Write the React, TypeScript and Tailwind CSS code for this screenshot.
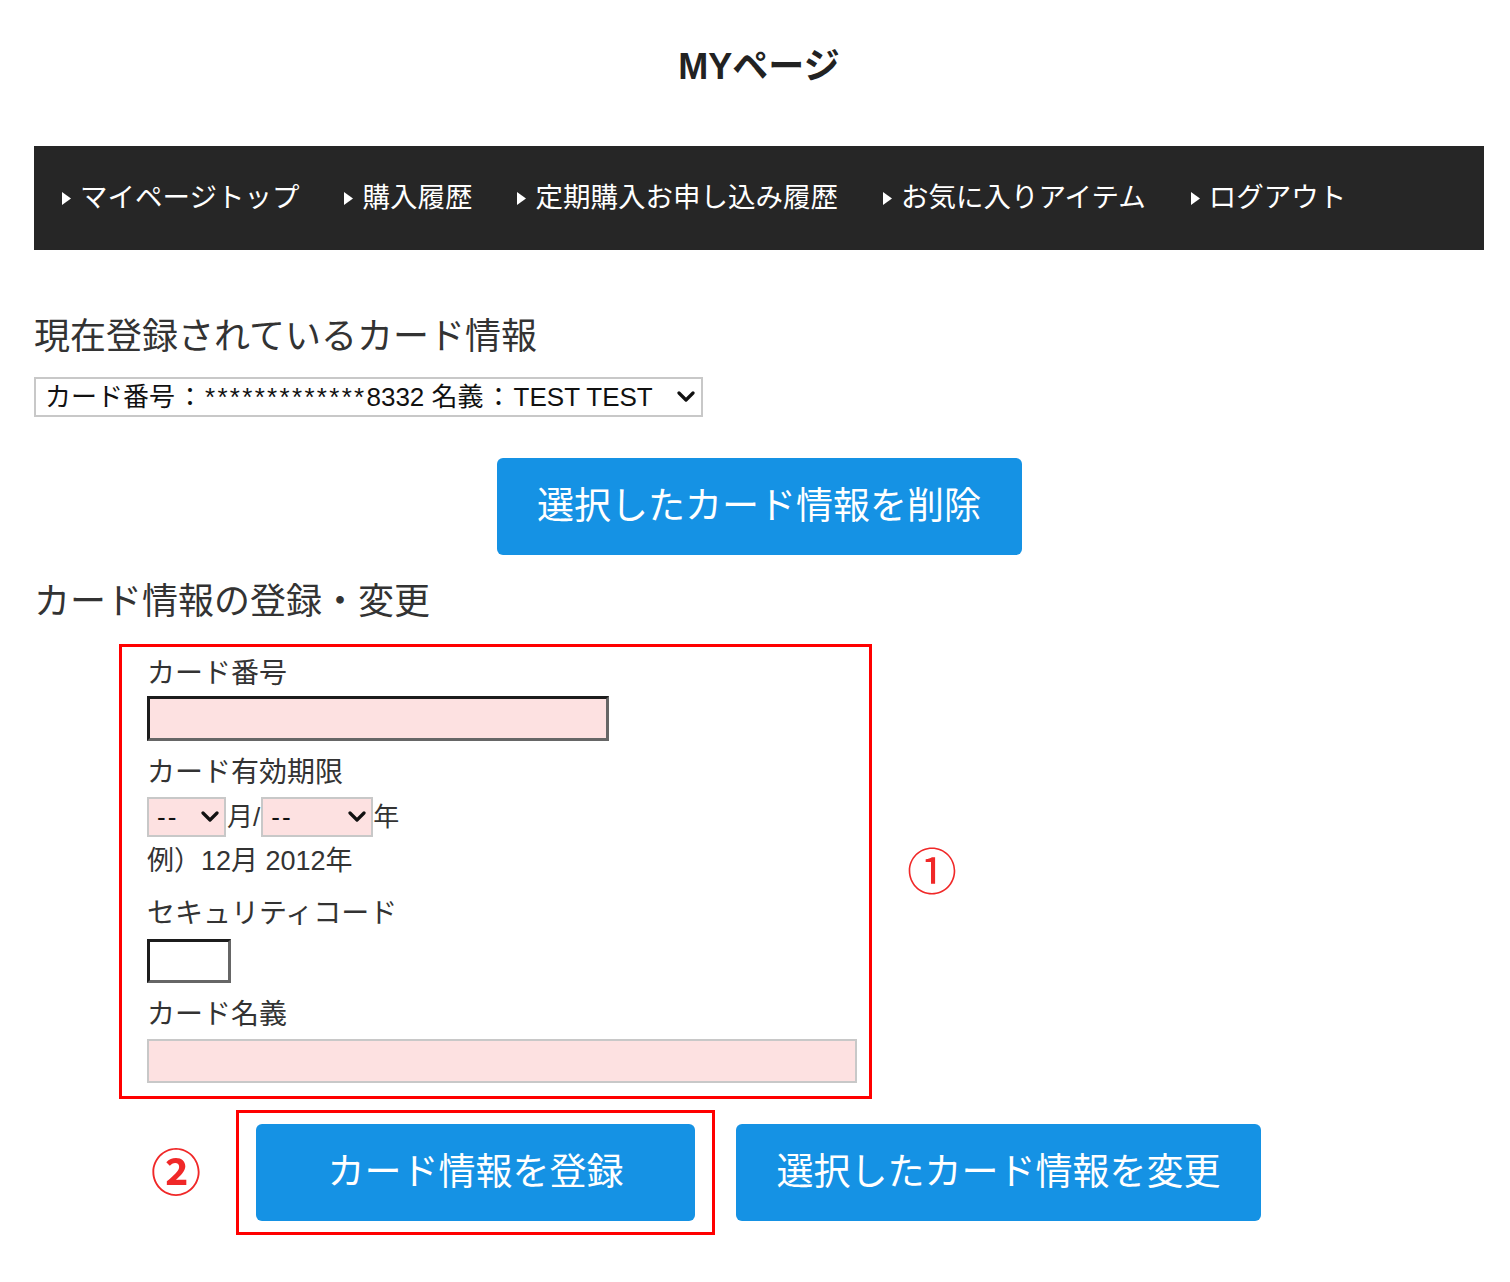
import React from 'react';

const FONT = 'font-["Liberation_Sans","Noto_Sans_CJK_JP",sans-serif]';

function NavItem({ label }: { label: string }) {
  return (
    <div className="flex items-center">
      <svg width="9" height="13" viewBox="0 0 9 13" className="mr-[9px]">
        <path d="M0 0 L9 6.5 L0 13 Z" fill="#ffffff" />
      </svg>
      <span>{label}</span>
    </div>
  );
}

function Chevron() {
  return (
    <svg width="18" height="12" viewBox="0 0 18 12">
      <path d="M2 2 L9 9 L16 2" fill="none" stroke="#111" strokeWidth="3.2" strokeLinecap="round" strokeLinejoin="round" />
    </svg>
  );
}

export default function App() {
  const navItems = ['マイページトップ', '購入履歴', '定期購入お申し込み履歴', 'お気に入りアイテム', 'ログアウト'];

  return (
    <div className={`min-h-screen w-[1510px] bg-white text-[#333] ${FONT}`}>
      <div className="pl-[34px] pr-[26px]">
        {/* title */}
        <div className="h-[146px] pt-[47px]">
          <h1 className="text-center text-[36px] leading-[40px] font-bold text-[#222]">MYページ</h1>
        </div>

        {/* nav */}
        <nav className="h-[104px] bg-[#262626] flex items-center pl-[28px] gap-[45px] text-white text-[27.5px] leading-none">
          {navItems.map((n) => (
            <NavItem key={n} label={n} />
          ))}
        </nav>

        {/* registered card */}
        <h2 className="mt-[67px] text-[36px] leading-[40px]">現在登録されているカード情報</h2>
        <div className="mt-[20px] w-[669px] h-[40px] border-2 border-[#c8c8c8] flex items-center justify-between pl-[9px] pr-[6px] text-[26px] text-[#111]">
          <span>
            カード番号<span className="mx-[2px]">：</span>
            <span className="tracking-[2.3px]">*************</span>8332 名義<span className="mx-[2px]">：</span>TEST TEST
          </span>
          <Chevron />
        </div>

        <div className="mt-[41px] flex justify-center">
          <button className="w-[525px] h-[97px] rounded-[6px] bg-[#1592e4] text-white text-[37px]">
            選択したカード情報を削除
          </button>
        </div>

        <h2 className="mt-[27px] text-[36px] leading-[40px]">カード情報の登録・変更</h2>

        {/* form */}
        <div className="mt-[22px] ml-[85px] flex items-center">
          <div className="w-[753px] border-[3px] border-[#ff0000] pl-[25px] pt-[9px] pb-[13px] text-[28px] leading-[36px]">
            <div>カード番号</div>
            <div className="mt-[4px] w-[462px] h-[45px] bg-[#fde1e1] border-[3px] border-t-[#1c1c1c] border-l-[#1c1c1c] border-r-[#666] border-b-[#666]" />

            <div className="mt-[14px]">カード有効期限</div>
            <div className="mt-[6px] flex items-center text-[26px]">
              <div className="w-[79px] h-[40px] bg-[#fde1e1] border-2 border-[#c8c8c8] flex items-center justify-between pl-[8px] pr-[5px] text-[#111]">
                <span className="tracking-[2px]">--</span>
                <Chevron />
              </div>
              <span className="mx-[1px]">月/</span>
              <div className="w-[112px] h-[40px] bg-[#fde1e1] border-2 border-[#c8c8c8] flex items-center justify-between pl-[8px] pr-[5px] text-[#111]">
                <span className="tracking-[2px]">--</span>
                <Chevron />
              </div>
              <span>年</span>
            </div>
            <div className="mt-[6px] text-[27px]">例）12月 2012年</div>

            <div className="mt-[17px]">セキュリティコード</div>
            <div className="mt-[7px] w-[84px] h-[44px] bg-white border-[3px] border-t-[#1c1c1c] border-l-[#1c1c1c] border-r-[#666] border-b-[#666]" />

            <div className="mt-[14px]">カード名義</div>
            <div className="mt-[6px] w-[710px] h-[44px] bg-[#fde1e1] border-2 border-[#c8c8c8]" />
          </div>
          <span className="ml-[35px] pb-[8px] text-[50px] leading-none text-[#f02828] font-['Noto_Sans_CJK_JP',sans-serif]">①</span>
        </div>

        {/* buttons */}
        <div className="mt-[11px] flex items-center">
          <span className="ml-[117px] w-[51px] pb-[8px] text-[50px] leading-none text-[#f02828] font-bold font-['Noto_Sans_CJK_JP',sans-serif]">②</span>
          <div className="ml-[34px] border-[3px] border-[#ff0000] px-[17px] py-[11px]">
            <button className="w-[439px] h-[97px] rounded-[6px] bg-[#1592e4] text-white text-[37px]">
              カード情報を登録
            </button>
          </div>
          <button className="ml-[21px] w-[525px] h-[97px] rounded-[6px] bg-[#1592e4] text-white text-[37px]">
            選択したカード情報を変更
          </button>
        </div>
      </div>
    </div>
  );
}
